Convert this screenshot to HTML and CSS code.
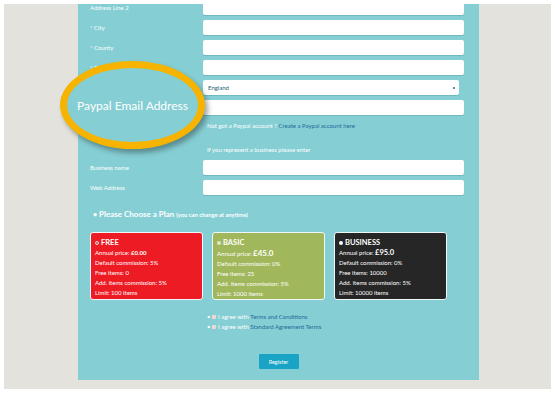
FILE: index.html
```html
<!DOCTYPE html>
<html>
<head>
<meta charset="utf-8">
<link rel="stylesheet" href="styles.css">
</head>
<body>
<div class="frame">
  <div class="panel">
    <div class="form">
      <div class="rows">
        <label class="lbl">Address Line 2</label><div class="input"></div>
        <label class="lbl">* City</label><div class="input"></div>
        <label class="lbl">* County</label><div class="input"></div>
        <label class="lbl">* Postcode</label><div class="input"></div>
        <label class="lbl"></label><div class="input select"><span>England</span><i class="dot"></i></div>
        <label class="lbl"></label><div class="input"></div>
      </div>
      <p class="note">Not got a Paypal account ? <a class="link">Create a Paypal account here</a></p>
      <p class="note note2">If you represent a business please enter</p>
      <div class="rows">
        <label class="lbl">Business name</label><div class="input"></div>
        <label class="lbl">Web Address</label><div class="input"></div>
      </div>
      <h3 class="plan-head"><span class="bul">•</span> Please Choose a Plan <small>(you can change at anytime)</small></h3>
      <div class="plans">
        <div class="card red">
          <div class="title"><i class="radio ring"></i>FREE</div>
          <div>Annual price: <b>£0.00</b></div>
          <div>Default commission: 5%</div>
          <div>Free items: 0</div>
          <div>Add. items commission: 5%</div>
          <div>Limit: 100 items</div>
        </div>
        <div class="card green">
          <div class="title"><i class="radio soft"></i>BASIC</div>
          <div>Annual price: <b class="big">£45.0</b></div>
          <div>Default commission: 0%</div>
          <div>Free items: 25</div>
          <div>Add. items commission: 5%</div>
          <div>Limit: 1000 items</div>
        </div>
        <div class="card dark">
          <div class="title"><i class="radio full"></i>BUSINESS</div>
          <div>Annual price: <b class="mid">£95.0</b></div>
          <div>Default commission: 0%</div>
          <div>Free items: 10000</div>
          <div>Add. items commission: 5%</div>
          <div>Limit: 10000 items</div>
        </div>
      </div>
      <div class="agree">
        <div class="ag"><span class="b">•</span><i class="cb"></i>I agree with&nbsp;<a class="link">Terms and Conditions</a></div>
        <div class="ag"><span class="b">•</span><i class="cb"></i>I agree with&nbsp;<a class="link">Standard Agreement Terms</a></div>
      </div>
      <div class="btn-wrap"><button class="btn">Register</button></div>
    </div>
    <div class="callout"><span>Paypal Email Address</span></div>
  </div>
</div>
</body>
</html>
```
FILE: styles.css
```css
html, body { margin: 0; padding: 0; background: #fff; }
body { width: 555px; height: 395px; overflow: hidden; font-family: Lato, "Open Sans", sans-serif; }
.frame {
  margin: 4px 0 0 4px;
  width: 547px;
  height: 385px;
  background: #e4e2dd;
  overflow: hidden;
}
.panel {
  position: relative;
  margin-left: 74px;
  width: 401px;
  height: 380px;
  background: #85ced4;
  color: #fff;
}
.form { margin-top: -4px; }
.rows {
  display: grid;
  grid-template-columns: 113px 261px;
  grid-auto-rows: 15px;
  row-gap: 5px;
  padding-left: 12px;
}
.lbl { font-size: 6px; line-height: 15px; color: #fff; }
.input {
  background: #fff;
  border-radius: 2px;
  box-shadow: 0 1px 0 #6fb9bf;
  box-sizing: border-box;
}
.select {
  width: 256px;
  display: flex;
  align-items: center;
  justify-content: space-between;
  padding: 0 4px 0 5px;
  font-size: 6px;
  color: #225c73;
}
.dot { width: 2px; height: 2px; background: #1f6c8e; border-radius: 50%; }
.note {
  margin: 7px 0 0 129px;
  font-size: 6px;
  line-height: 7px;
}
.note2 { margin-top: 17px; margin-bottom: 7px; }
.link { color: #1f6a98; }
.plan-head {
  margin: 15px 0 0 15px;
  font-size: 8px;
  line-height: 9px;
  font-weight: 700;
}
.plan-head small { font-size: 5.8px; }
.plan-head .bul { font-size: 7px; }
.plans {
  display: flex;
  gap: 9px;
  padding-left: 12px;
  margin-top: 13px;
}
.card {
  width: 113px;
  height: 68px;
  box-sizing: border-box;
  border: 1px solid #eef8f9;
  border-radius: 3px;
  padding: 5px 0 0 4px;
  font-size: 6px;
  line-height: 10px;
  color: #fff;
}
.card .title { font-weight: 700; font-size: 7.5px; display: flex; align-items: center; gap: 2px; height: 10px; }
.red { background: #ed1c24; }
.green { background: #a1b75b; }
.dark { background: #262626; }
.radio { width: 4px; height: 4px; border-radius: 50%; display: inline-block; box-sizing: border-box; }
.ring { border: 1px solid #f3d2d2; background: #a8585a; }
.soft { background: #dfe6cc; }
.full { background: #fff; }
.big { font-size: 8px; }
.mid { font-size: 7.5px; }
.agree { margin: 12px 0 0 129px; font-size: 6px; line-height: 10px; }
.ag { display: flex; align-items: center; }
.ag .b { width: 5px; font-size: 6px; }
.cb { width: 4px; height: 4px; background: #e8d9d4; margin-right: 2px; }
.btn-wrap { display: flex; justify-content: center; margin-top: 22px; }
.btn {
  width: 40px;
  height: 15px;
  border: 0;
  border-radius: 1px;
  background: #19a3c4;
  color: #fff;
  font-family: Lato, sans-serif;
  font-size: 5.5px;
  padding: 0;
}
.callout {
  position: absolute;
  left: -18px;
  top: 61px;
  width: 145px;
  height: 88px;
  box-sizing: border-box;
  border: 7px solid #f6b400;
  border-radius: 50%;
  background: #85ced4;
  box-shadow: 3px 4px 5px rgba(40, 60, 60, 0.45);
  display: flex;
  align-items: center;
  justify-content: center;
}
.callout span { font-size: 12px; color: #fff; white-space: nowrap; }
```
